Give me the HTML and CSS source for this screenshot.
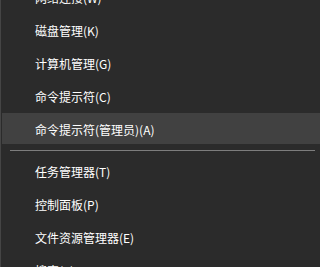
FILE: index.html
```html
<!DOCTYPE html>
<html lang="zh-CN">
<head>
<meta charset="utf-8">
<link rel="stylesheet" href="styles.css">
</head>
<body>
<div class="menu">
  <div class="item">网络连接(W)</div>
  <div class="item">磁盘管理(K)</div>
  <div class="item">计算机管理(G)</div>
  <div class="item">命令提示符(C)</div>
  <div class="item hover">命令提示符(管理员)(A)</div>
  <div class="sep"></div>
  <div class="item">任务管理器(T)</div>
  <div class="item">控制面板(P)</div>
  <div class="item">文件资源管理器(E)</div>
  <div class="item">搜索(S)</div>
</div>
</body>
</html>
```
FILE: styles.css
```css
html, body {
  margin: 0;
  padding: 0;
  background: #2b2b2b;
  overflow: hidden;
}
.menu {
  margin-top: -19px;
  border-left: 1px solid #454545;
  padding-left: 1px;
  min-height: 300px;
  display: flex;
  flex-direction: column;
  font-family: "Noto Sans CJK SC", "Noto Sans", sans-serif;
  font-size: 12px;
  color: #ffffff;
}
.item {
  height: 30px;
  padding-top: 1px;
  line-height: 31px;
  margin-bottom: 2px;
  padding-left: 33px;
  white-space: nowrap;
}
.item.hover {
  background: #414141;
  margin-bottom: 0;
}
.sep {
  height: 1px;
  background: #7d7d7d;
  margin: 6px 5px 4px 8px;
}
```
